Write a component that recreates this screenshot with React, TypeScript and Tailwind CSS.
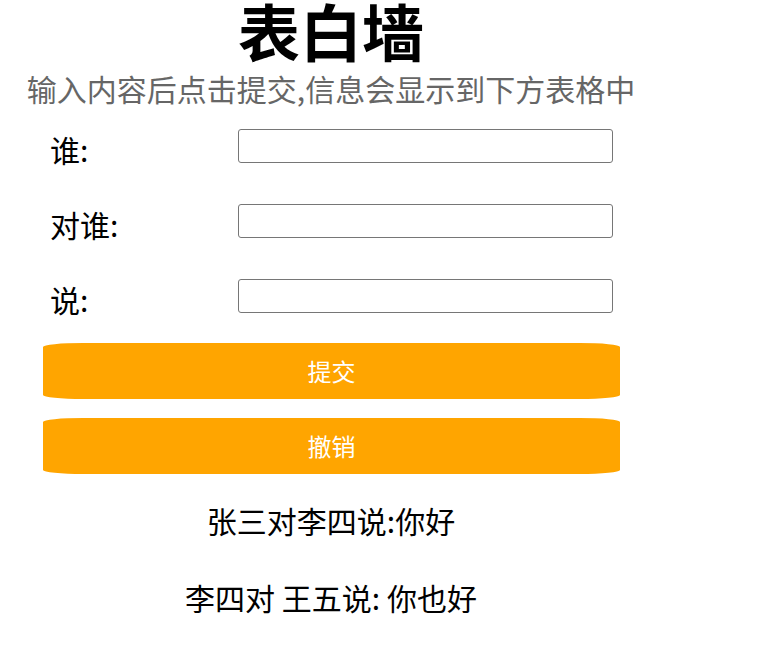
import React from "react";

const font = { fontFamily: '"Noto Sans CJK SC", "Noto Sans", sans-serif' };

function Row({ label }: { label: string }) {
  return (
    <div className="flex items-center h-[34px] pl-[50px]">
      <span className="w-[188px] text-[30px] leading-[34px] text-black pt-[6px]">{label}</span>
      <input
        type="text"
        className="w-[375px] h-[34px] border border-[#767676] rounded-[3px] bg-white outline-none"
      />
    </div>
  );
}

export default function App() {
  return (
    <div className="w-[662px] bg-white" style={font}>
      <h1 className="text-center text-[62px] font-bold leading-[60px] text-black">表白墙</h1>
      <p className="mt-[6px] text-center text-[30px] leading-[44px] text-[#666666]">
        输入内容后点击提交,信息会显示到下方表格中
      </p>
      <div className="mt-[19px] flex flex-col gap-[41px]">
        <Row label="谁:" />
        <Row label="对谁:" />
        <Row label="说:" />
      </div>
      <div className="mt-[30px] flex flex-col gap-[19px] pl-[43px]">
        <button className="w-[577px] h-[56px] bg-[#FFA500] text-white text-[24px] rounded-[40px/4px]">
          提交
        </button>
        <button className="w-[577px] h-[56px] bg-[#FFA500] text-white text-[24px] rounded-[40px/4px]">
          撤销
        </button>
      </div>
      <div className="mt-[26px] flex flex-col gap-[37px] text-[30px] leading-[40px] text-black text-center">
        <div>张三对李四说:你好</div>
        <div>李四对 王五说: 你也好</div>
      </div>
    </div>
  );
}
